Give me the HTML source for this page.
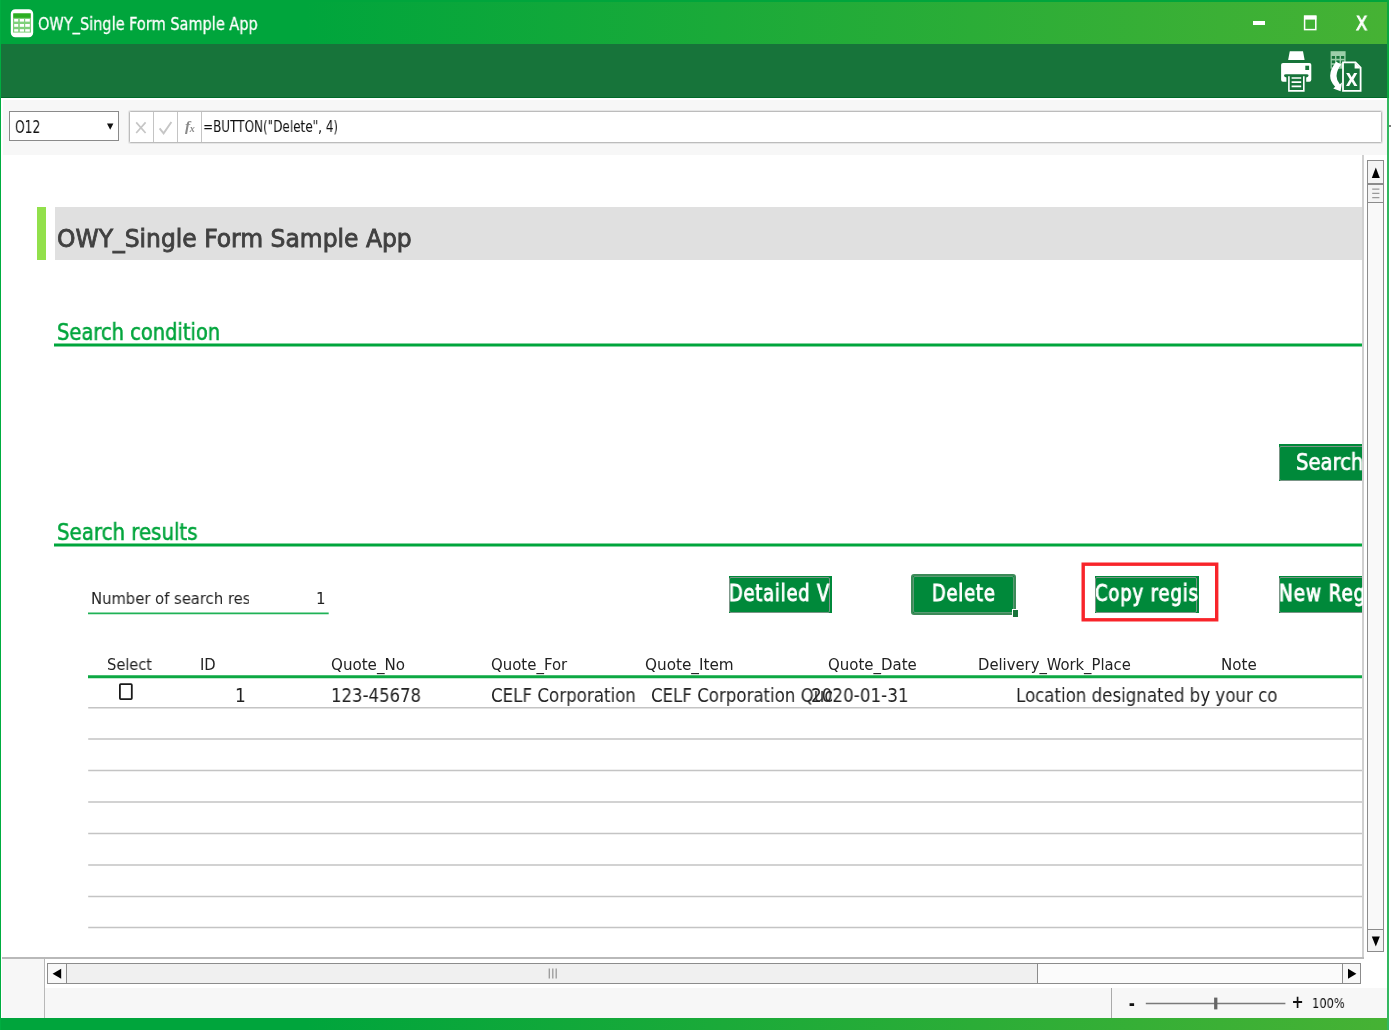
<!DOCTYPE html>
<html lang="en">
<head>
<meta charset="utf-8">
<title>OWY_Single Form Sample App</title>
<style>
html,body{margin:0;padding:0;background:#fff;}
body{width:1391px;height:1030px;position:relative;overflow:hidden;font-family:"DejaVu Sans Condensed","Liberation Sans",sans-serif;color:#222;}
.abs{position:absolute;}
.t{position:absolute;white-space:nowrap;transform-origin:0 0;line-height:1;will-change:transform;}
#win{position:absolute;left:0;top:0;width:1391px;height:1030px;overflow:hidden;background:#fff;}
#titlebar{left:0;top:0;width:1389px;height:44px;background:linear-gradient(90deg,#00a53c 0%,#00a53c 22%,#46b234 100%);}
#topedge{left:0;top:0;width:1389px;height:2px;background:#00a53c;}
#toolbar{left:0;top:44px;width:1389px;height:54px;background:#17743a;border-bottom:1.4px solid #006a28;box-sizing:border-box;}
#fbar{left:3px;top:100.4px;width:1384px;height:54.6px;background:#f7f7f7;}
#lborder{left:0;top:0;width:1.2px;height:1030px;background:#00ad40;}
#rborder{left:1387px;top:0;width:2px;height:1030px;background:#33b860;}
#bottombar{left:0;top:1018px;width:1389px;height:12px;background:linear-gradient(90deg,#00a53c 0%,#00a53c 22%,#46b234 100%);}
#status{left:2px;top:988px;width:1385px;height:30px;background:#f7f7f7;}
#corner{left:2px;top:958px;width:42px;height:60px;background:#f7f7f7;}
.gl{position:absolute;left:88px;width:1274.4px;height:1.4px;background:#c6c6c6;}
.btn{position:absolute;background:#00893a;overflow:hidden;}
.btn .in{position:absolute;left:0;top:1.4px;right:2.2px;bottom:0;border:1px solid #7b9587;border-radius:2px;}
.sb{position:absolute;box-sizing:border-box;border:1px solid #8c8c8c;background:#f0f0f0;}
</style>
</head>
<body>
<div id="win">
  <div id="titlebar" class="abs"></div>
  <div id="topedge" class="abs"></div>
  <div id="toolbar" class="abs"></div>
  <div id="fbar" class="abs"></div>
  <div id="status" class="abs"></div>
  <div id="corner" class="abs"></div>
  <!-- app icon -->
  <svg class="abs" style="left:10px;top:8px" width="24" height="30" viewBox="0 0 24 30">
    <rect x="1.9" y="2.3" width="20.2" height="25.8" rx="3.4" ry="3.4" fill="#7fd07b" stroke="#fff" stroke-width="2.2"/>
    <rect x="3" y="24.6" width="18" height="3" fill="#fff"/>
    <rect x="3" y="3" width="18" height="2.4" fill="#fff"/><rect x="3.4" y="5.4" width="17.2" height="4.4" fill="#2cae22"/>
    <g fill="#fff">
      <rect x="4.2" y="11" width="4" height="2.6"/><rect x="9.8" y="11" width="4.2" height="2.6"/><rect x="15.2" y="11" width="4.6" height="2.6"/>
      <rect x="4.2" y="16" width="4" height="2.8"/><rect x="9.8" y="16" width="4.2" height="2.8"/><rect x="15.2" y="16" width="4.6" height="2.8"/>
      <rect x="4.2" y="21.2" width="4" height="2.4"/><rect x="9.8" y="21.2" width="4.2" height="2.4"/><rect x="15.2" y="21.2" width="4.6" height="2.4"/>
    </g>
  </svg>
  <!-- window controls -->
  <div class="abs" style="left:1253px;top:21px;width:12px;height:4px;background:#fff"></div>
  <svg class="abs" style="left:1303px;top:15px" width="15" height="16" viewBox="0 0 15 16">
    <rect x="1.6" y="1.2" width="11.2" height="13.4" fill="none" stroke="#fff" stroke-width="1.5"/>
    <rect x="1" y="0.6" width="12.4" height="4" fill="#fff"/>
  </svg>
  <!-- printer icon -->
  <svg class="abs" style="left:1279px;top:49px" width="36" height="46" viewBox="1279 49 36 46">
    <path d="M1289.8 51.2 L1303 51.2 L1304.6 59.9 L1288.1 59.9 Z" fill="#fff"/>
    <path d="M1283 62.9 H1309.4 Q1311.3 62.9 1311.3 64.8 V79.8 Q1311.3 81.7 1309.4 81.7 H1306.2 V77.6 Q1308.6 77.2 1308.6 75.6 Q1308.6 74.2 1306.6 74.2 H1286 Q1284 74.2 1284 75.6 Q1284 77.2 1286.4 77.6 V81.7 H1283 Q1281.1 81.7 1281.1 79.8 V64.8 Q1281.1 62.9 1283 62.9 Z" fill="#fff"/>
    <rect x="1305.3" y="65.7" width="3.8" height="4.3" fill="#17743a"/>
    <path d="M1288.9 76.2 V90.9 H1303.8 V76.2" fill="none" stroke="#fff" stroke-width="1.6"/>
    <path d="M1291.6 78 H1301.2 M1291.6 82.2 H1301.2 M1291.6 86.4 H1301.2" stroke="#fff" stroke-width="1.7" fill="none"/>
  </svg>
  <!-- export to excel icon -->
  <svg class="abs" style="left:1326px;top:49px;will-change:transform" width="40" height="46" viewBox="1326 49 40 46">
    <rect x="1330.6" y="51.2" width="15" height="17.5" fill="#9ccfa9"/>
    <g fill="#17743a">
      <rect x="1331.8" y="56" width="3.2" height="2.8"/><rect x="1336.4" y="56" width="3.2" height="2.8"/><rect x="1341" y="56" width="3.2" height="2.8"/>
      <rect x="1331.8" y="60.4" width="3.2" height="2.8"/><rect x="1336.4" y="60.4" width="3.2" height="2.8"/><rect x="1341" y="60.4" width="3.2" height="2.8"/>
      <rect x="1331.8" y="64.8" width="3.2" height="2.8"/><rect x="1336.4" y="64.8" width="3.2" height="2.8"/>
    </g>
    <path d="M1336.2 61.8 Q1324.6 76 1335.2 86.8 L1333.2 88.6 L1340.6 91.2 L1342 82.4 L1339.8 84.2 Q1332.6 76 1341.2 64.4 Z" fill="#fff"/>
    <path d="M1343 62.4 H1355.5 L1360.6 67.6 V90.8 H1343 Z" fill="#17743a" stroke="#fff" stroke-width="1.8" stroke-linejoin="miter"/>
    <path d="M1354.6 62.4 V68.4 H1360.6 Z" fill="#fff"/>
    <text x="1351.7" y="85.9" text-anchor="middle" font-family="'DejaVu Sans Condensed','Liberation Sans',sans-serif" font-weight="bold" font-size="17.2" fill="#fff">X</text>
  </svg>
  <!-- name box -->
  <div class="abs" style="left:9px;top:111px;width:110px;height:30px;box-sizing:border-box;border:1.5px solid #8a8a8a;background:#fff"></div>
  <svg class="abs" style="left:106px;top:121.8px" width="9" height="9" viewBox="0 0 9 9"><path d="M1 1.4 H7.4 L4.2 7.8 Z" fill="#111"/></svg>
  <!-- fx buttons -->
  <div class="abs" style="left:129px;top:111px;width:1253px;height:32px;box-sizing:border-box;border:1px solid #bcbcbc;border-radius:1.5px;background:#fff;box-shadow:0 0 0 1px rgba(190,190,190,0.3)"></div>
  <div class="abs" style="left:153px;top:112px;width:1.2px;height:30px;background:#c4c4c4"></div>
  <div class="abs" style="left:177px;top:112px;width:1.2px;height:30px;background:#c4c4c4"></div>
  <div class="abs" style="left:201px;top:112px;width:1.2px;height:30px;background:#c4c4c4"></div>
  <svg class="abs" style="left:133px;top:119.2px" width="18" height="18" viewBox="0 0 18 18"><path d="M3.2 3.4 L12.6 14 M12.6 3.4 L3.2 14" stroke="#c6c6c6" stroke-width="1.7" fill="none"/></svg>
  <svg class="abs" style="left:157px;top:119.2px" width="18" height="18" viewBox="0 0 18 18"><path d="M2.6 9.4 L6.6 14.4 L14.4 3" stroke="#c6c6c6" stroke-width="1.9" fill="none"/></svg>
  <span class="t" style="left:185px;top:118.4px;font-family:'Liberation Serif','DejaVu Serif',serif;font-style:italic;font-weight:bold;font-size:15.5px;color:#8a8a8a;">f<span style="font-size:10px;position:relative;top:0.5px;left:-0.5px">x</span></span>
  <!-- sheet content -->
  <div class="abs" style="left:36.5px;top:207px;width:9.3px;height:52.6px;background:#92e04b"></div>
  <div class="abs" style="left:55px;top:207px;width:1307.5px;height:52.6px;background:#e0e0e0"></div>
  <svg class="abs" style="left:0;top:300px" width="1363" height="640" viewBox="0 300 1363 640">
    <path d="M54 345 H1362.5 M54 545 H1362.5" stroke="#00a53c" stroke-width="3.1"/>
    <path d="M88 613.3 H328.7" stroke="#1fb256" stroke-width="1.7"/>
    <path d="M88 676.7 H1362.5" stroke="#0da843" stroke-width="3.1"/>
    <path d="M88.2 707.7 H1362.5 M88.2 739.1 H1362.5 M88.2 770.6 H1362.5 M88.2 802.1 H1362.5 M88.2 833.5 H1362.5 M88.2 865.0 H1362.5 M88.2 896.4 H1362.5 M88.2 927.6 H1362.5" stroke="#c4c4c4" stroke-width="1.5"/>
  </svg>
  <!-- checkbox -->
  <svg class="abs" style="left:116px;top:680px" width="20" height="24" viewBox="116 680 20 24"><rect x="119.9" y="684.1" width="11.9" height="15" rx="0.8" fill="#fff" stroke="#1a1a1a" stroke-width="1.8"/></svg>
  <!-- buttons -->
  <div class="btn" style="left:1279px;top:444.3px;width:83.5px;height:37px;"><div class="in" style="right:-3px"></div></div>
  <div class="btn" style="left:728.8px;top:576px;width:103.6px;height:36.6px;"><div class="in"></div></div>
  <div class="abs" style="left:910.8px;top:574.4px;width:105px;height:41px;box-sizing:border-box;border:2.4px solid #3c8a58;border-radius:3px;background:#00893a"><div class="abs" style="left:0;top:0;right:0;bottom:0;border:1px solid #5a9a74;border-radius:2px"></div></div>
  <div class="abs" style="left:1011.6px;top:609px;width:7.4px;height:8.6px;background:#fff"></div>
  <div class="abs" style="left:1012.8px;top:610.2px;width:5.2px;height:6.4px;background:#17743a"></div>
  <svg class="abs" style="left:1078px;top:560px" width="144" height="64" viewBox="1078 560 144 64"><rect x="1083.2" y="564.2" width="133.5" height="55.6" fill="none" stroke="#f8242a" stroke-width="3.4"/></svg>
  <div class="btn" style="left:1094.9px;top:576px;width:104.1px;height:36.6px;"><div class="in"></div></div>
  <div class="btn" style="left:1279.2px;top:576px;width:83.3px;height:36.6px;"><div class="in" style="right:-3px"></div></div>
  <!-- right vertical line + v scrollbar -->
  <div class="abs" style="left:1362px;top:155px;width:2px;height:804px;background:#d0d0d0"></div>
  <div class="abs" style="left:2px;top:957px;width:1362.4px;height:2px;background:#b9b9b9"></div>
  <div class="abs" style="left:43.5px;top:958px;width:1.3px;height:60px;background:#b8b8b8"></div>
  <div class="sb" style="left:1367px;top:160px;width:17.4px;height:792.4px;background:#f9f9f9;border-width:1.4px"></div>
  <div class="sb" style="left:1367px;top:160px;width:17.4px;height:24.4px;background:#f4f4f4;border-width:1.4px"></div>
  <div class="sb" style="left:1367px;top:184px;width:17.4px;height:18.6px;background:#f4f4f4;border-width:1.4px"></div>
  <div class="sb" style="left:1367px;top:929.4px;width:17.4px;height:23px;background:#f4f4f4;border-width:1.4px"></div>
  <svg class="abs" style="left:1367px;top:160px" width="18" height="44" viewBox="0 0 18 44">
    <path d="M4.8 18 H12.8 L8.8 7.6 Z" fill="#000"/>
    <path d="M5.2 29.2 H12.4 M5.2 33.4 H12.4 M5.2 37.6 H12.4" stroke="#999" stroke-width="1.3"/>
  </svg>
  <svg class="abs" style="left:1367px;top:929px" width="18" height="24" viewBox="0 0 18 24"><path d="M4.8 7.4 H12.8 L8.8 17.6 Z" fill="#000"/></svg>
  <!-- h scrollbar -->
  <div class="sb" style="left:47px;top:963px;width:1314px;height:21.4px;background:#fbfbfb;border-width:1.4px"></div>
  <div class="sb" style="left:47px;top:963px;width:991px;height:21.4px;background:#f0f0f0;border-width:1.4px"></div>
  <div class="sb" style="left:47px;top:963px;width:19.6px;height:21.4px;background:#f8f8f8;border-width:1.4px"></div>
  <div class="sb" style="left:1342px;top:963px;width:19px;height:21.4px;background:#f8f8f8;border-width:1.4px"></div>
  <svg class="abs" style="left:47px;top:963px" width="20" height="22" viewBox="0 0 20 22"><path d="M14.2 5.8 V15.8 L5.6 10.8 Z" fill="#000"/></svg>
  <svg class="abs" style="left:1342px;top:963px" width="20" height="22" viewBox="0 0 20 22"><path d="M6 5.8 V15.8 L14.4 10.8 Z" fill="#000"/></svg>
  <svg class="abs" style="left:546px;top:966px" width="14" height="16" viewBox="546 966 14 16"><path d="M549.3 968.6 V978.6 M552.8 968.6 V978.6 M556.2 968.6 V978.6" stroke="#9a9a9a" stroke-width="1.3"/></svg>
  <!-- status / zoom -->
  <div class="abs" style="left:1111.2px;top:988.4px;width:1.3px;height:30px;background:#aaa"></div>
  <svg class="abs" style="left:1120px;top:990px;will-change:transform" width="200" height="26" viewBox="1120 990 200 26">
    <text transform="translate(1128.7,1009.8) scale(1.03,1.25)" font-family="'DejaVu Sans Condensed','Liberation Sans',sans-serif" font-weight="bold" font-size="16" fill="#111">-</text>
    <path d="M1145.8 1003.4 H1285.4" stroke="#7a7a7a" stroke-width="1.5"/>
    <rect x="1214.1" y="997.6" width="3.3" height="11.8" fill="#666"/>
    <text transform="translate(1291.55,1007.8) scale(1.009,1.15)" font-family="'DejaVu Sans Condensed','Liberation Sans',sans-serif" font-weight="bold" font-size="16" fill="#111">+</text>
  </svg>
  <div class="abs" style="left:1389px;top:125.4px;width:2px;height:1.6px;background:#7d7d7d"></div>
  <div id="bottombar" class="abs"></div>
  <div id="lborder" class="abs"></div>
  <div id="rborder" class="abs"></div>
  <div class="abs" style="left:1387px;top:0;width:2px;height:98px;background:#0aa83e"></div>
<span class="t" style="left:38.09px;top:14.90px;font-size:18.08px;color:#fff;transform:scaleX(0.8928);-webkit-text-stroke:0.3px #fff;">OWY_Single Form Sample App</span>
<span class="t" style="left:14.82px;top:119.28px;font-size:17.40px;color:#111;transform:scaleX(0.7852);">O12</span>
<span class="t" style="left:202.80px;top:119.49px;font-size:16.44px;color:#111;transform:scaleX(0.8123);">=BUTTON(&quot;Delete&quot;, 4)</span>
<span class="t" style="left:57.30px;top:225.78px;font-size:25.21px;color:#404040;transform:scaleX(1.0340);-webkit-text-stroke:0.8px #404040;">OWY_Single Form Sample App</span>
<span class="t" style="left:56.82px;top:320.85px;font-size:23.70px;color:#00a53c;transform:scaleX(0.9141);-webkit-text-stroke:0.5px #00a53c;">Search condition</span>
<span class="t" style="left:56.80px;top:520.85px;font-size:23.70px;color:#00a53c;transform:scaleX(0.9287);-webkit-text-stroke:0.5px #00a53c;">Search results</span>
<div class="abs" style="left:88px;top:585px;width:161.0px;height:27.0px;overflow:hidden"><span class="t" style="left:2.78px;top:5.06px;font-size:16.71px;color:#222;transform:scaleX(0.9850);">Number of search resu</span></div>
<span class="t" style="left:316.41px;top:590.06px;font-size:16.71px;color:#222;">1</span>
<span class="t" style="left:107.19px;top:657.09px;font-size:16.44px;color:#222;transform:scaleX(0.9865);">Select</span>
<span class="t" style="left:200.28px;top:657.09px;font-size:16.44px;color:#222;">ID</span>
<span class="t" style="left:331.46px;top:657.09px;font-size:16.44px;color:#222;transform:scaleX(1.0215);">Quote_No</span>
<span class="t" style="left:490.97px;top:657.09px;font-size:16.44px;color:#222;transform:scaleX(1.0101);">Quote_For</span>
<span class="t" style="left:644.85px;top:657.09px;font-size:16.44px;color:#222;transform:scaleX(1.0309);">Quote_Item</span>
<span class="t" style="left:827.87px;top:657.09px;font-size:16.44px;color:#222;transform:scaleX(1.0121);">Quote_Date</span>
<span class="t" style="left:977.98px;top:657.09px;font-size:16.44px;color:#222;">Delivery_Work_Place</span>
<span class="t" style="left:1221.26px;top:657.09px;font-size:16.44px;color:#222;transform:scaleX(1.0191);">Note</span>
<span class="t" style="left:234.74px;top:686.01px;font-size:18.90px;color:#222;transform:scaleX(0.9780);">1</span>
<span class="t" style="left:330.65px;top:686.01px;font-size:18.90px;color:#222;transform:scaleX(0.9723);">123-45678</span>
<span class="t" style="left:490.87px;top:686.01px;font-size:18.90px;color:#222;transform:scaleX(0.9817);">CELF Corporation</span>
<div class="abs" style="left:645px;top:680px;width:187.0px;height:27.0px;overflow:hidden"><span class="t" style="left:5.78px;top:6.01px;font-size:18.90px;color:#222;transform:scaleX(0.9780);">CELF Corporation Quo</span></div>
<span class="t" style="left:810.68px;top:686.01px;font-size:18.90px;color:#222;transform:scaleX(0.9872);">2020-01-31</span>
<span class="t" style="left:1016.12px;top:686.01px;font-size:18.90px;color:#222;transform:scaleX(0.9794);">Location designated by your co</span>
<span class="t" style="left:1311.86px;top:996.00px;font-size:14.66px;color:#111;transform:scaleX(0.8679);">100%</span>
<div class="abs" style="left:1279px;top:445px;width:83.5px;height:36.0px;overflow:hidden"><span class="t" style="left:16.71px;top:6.07px;font-size:23.56px;color:#fff;transform:scaleX(0.9250);-webkit-text-stroke:0.65px #fff;">Search</span></div>
<div class="abs" style="left:729px;top:576px;width:102.0px;height:36.0px;overflow:hidden"><span class="t" style="left:0.02px;top:6.31px;font-size:22.33px;color:#fff;transform:scaleX(0.8824);-webkit-text-stroke:0.9px #fff;letter-spacing:1px;">Detailed V</span></div>
<span class="t" style="left:931.62px;top:582.31px;font-size:22.33px;color:#fff;transform:scaleX(0.8835);-webkit-text-stroke:0.9px #fff;letter-spacing:1px;">Delete</span>
<div class="abs" style="left:1095.5px;top:576px;width:103.1px;height:36.0px;overflow:hidden"><span class="t" style="left:-0.10px;top:6.31px;font-size:22.33px;color:#fff;transform:scaleX(0.8933);-webkit-text-stroke:0.9px #fff;letter-spacing:1px;">Copy regis</span></div>
<div class="abs" style="left:1280px;top:576px;width:82.5px;height:36.0px;overflow:hidden"><span class="t" style="left:-1.04px;top:6.31px;font-size:22.33px;color:#fff;transform:scaleX(0.9154);-webkit-text-stroke:0.9px #fff;letter-spacing:1px;">New Reg</span></div>
<span class="t" style="left:1355.94px;top:14.01px;font-size:18.90px;color:#fff;transform:scaleX(0.9652);-webkit-text-stroke:0.85px #fff;">X</span>
</div>
</body>
</html>
